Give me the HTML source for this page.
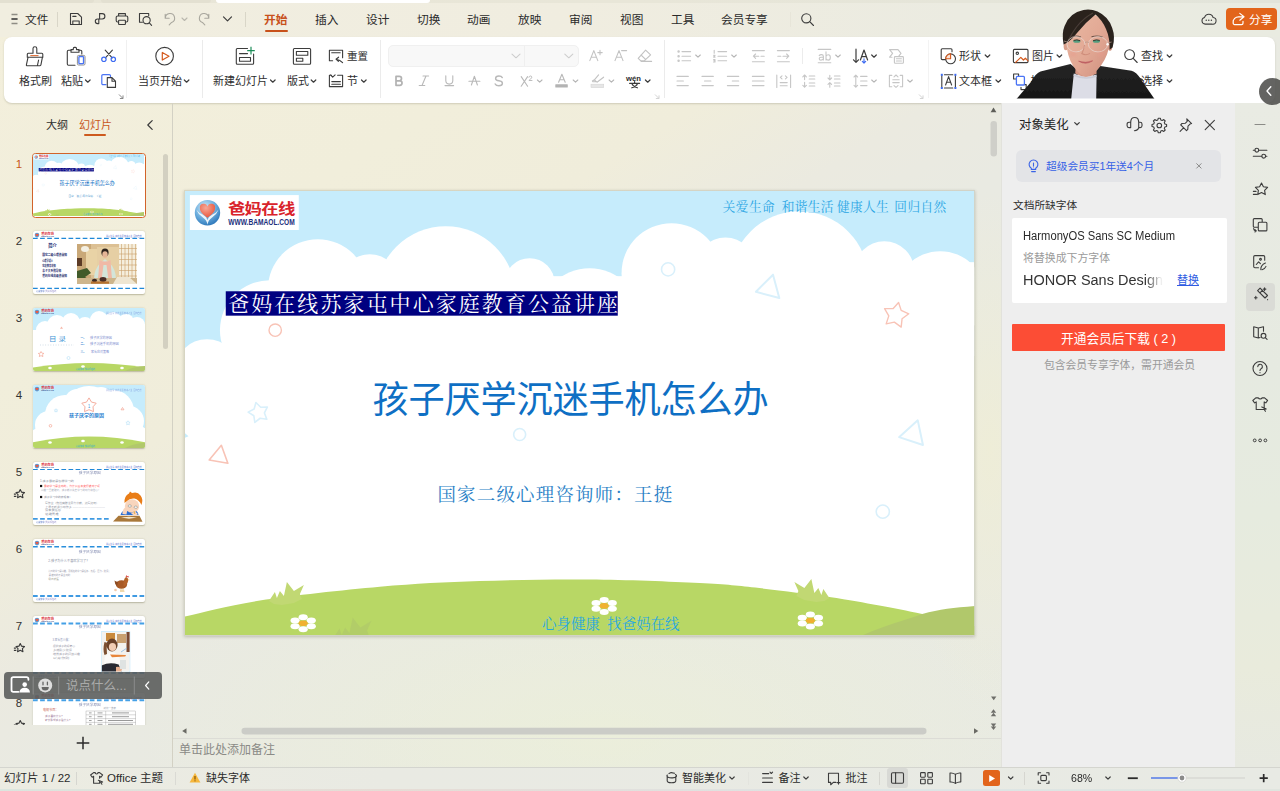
<!DOCTYPE html>
<html lang="zh-CN">
<head>
<meta charset="utf-8">
<title>WPS 演示 - 孩子厌学沉迷手机怎么办</title>
<style>
*{box-sizing:border-box;margin:0;padding:0}
html,body{width:1280px;height:791px;overflow:hidden}
body{position:relative;font-family:"Liberation Sans","Noto Sans CJK SC",sans-serif;font-size:12px;color:#2b2b2b;
background:radial-gradient(ellipse 470px 190px at 600px 735px,rgba(237,241,214,.6),rgba(237,241,214,0) 100%),radial-gradient(ellipse 90px 260px at 990px 450px,rgba(240,238,212,.75),rgba(240,238,212,0) 100%),linear-gradient(to bottom right,#f3efdc 0%,#f1eedb 24%,#f0eddb 34%,#ebeae0 43%,#e9eae2 50%,#e8eae3 100%)}
.a{position:absolute}
.t{position:absolute;white-space:nowrap;line-height:1}
svg{position:absolute;overflow:visible}
.ic{fill:none;stroke:#3c3c3c;stroke-width:1.1;stroke-linecap:round;stroke-linejoin:round}
.ig{fill:none;stroke:#b9b9b9;stroke-width:1.1;stroke-linecap:round;stroke-linejoin:round}
.r11{font-size:11px;color:#2e2e2e}
.chev{fill:none;stroke:#3c3c3c;stroke-width:1.2;stroke-linecap:round;stroke-linejoin:round}
.chevg{fill:none;stroke:#b5b5b5;stroke-width:1.1;stroke-linecap:round;stroke-linejoin:round}
.g{font-family:"Liberation Sans","Noto Sans CJK SC",sans-serif;font-size:1000px}
.gb{font-family:"Liberation Sans","Noto Sans CJK SC",sans-serif;font-size:1000px;font-weight:bold}
</style>
</head>
<body>
<svg width="0" height="0" style="position:absolute;left:-10px;top:-10px" aria-hidden="true"><defs><radialGradient id="lg1" cx=".4" cy=".3" r=".8"><stop offset="0" stop-color="#d6ecf8"/><stop offset=".5" stop-color="#6fb0df"/><stop offset="1" stop-color="#1f6bb2"/></radialGradient><radialGradient id="lg2" cx=".4" cy=".3" r=".8"><stop offset="0" stop-color="#f6a898"/><stop offset=".6" stop-color="#ee7058"/><stop offset="1" stop-color="#e2503a"/></radialGradient><symbol id="s1" viewBox="0 0 790 444" preserveAspectRatio="none"><rect width="790" height="444" fill="#c6ecfc"/><g fill="#fff"><circle cx="22.0" cy="180.2" r="32"/><circle cx="85.0" cy="139.2" r="50"/><circle cx="133.0" cy="98.2" r="50"/><circle cx="185.0" cy="93.2" r="30"/><circle cx="261.0" cy="105.2" r="70"/><circle cx="345.0" cy="92.2" r="25"/><circle cx="405.0" cy="129.2" r="52"/><circle cx="487.0" cy="82.2" r="50"/><circle cx="541.0" cy="76.6" r="30"/><circle cx="615.0" cy="89.2" r="69"/><circle cx="700.0" cy="80.2" r="30"/><circle cx="756.0" cy="105.2" r="45"/><rect x="0" y="160" width="790" height="284"/><rect x="85.0" y="139.2" width="705.0" height="25.8"/><rect x="105.0" y="98.2" width="685.0" height="66.8"/><rect x="160.0" y="85.2" width="630.0" height="79.8"/><rect x="455.0" y="71.2" width="335.0" height="93.8"/></g><path d="M0 242.2L3.500 245.2L0 246.7Z" fill="#c6ecfc"/><circle cx="90.3" cy="139.2" r="6.2" fill="none" stroke="#f8c3b6" stroke-width="1.4"/><circle cx="483.6" cy="78.4" r="6.6" fill="none" stroke="#d9f0fb" stroke-width="1.6"/><path d="M588.6 83.7L594.9 107.1L571.5 100.8Z" fill="none" stroke="#d9f0fb" stroke-width="2" stroke-linejoin="round"/><path d="M714.3 111.5L716.9 119.4L724.5 122.8L717.8 127.8L716.9 136.1L710.1 131.2L701.9 132.9L704.5 124.9L700.3 117.7L708.7 117.7Z" fill="none" stroke="#f8c3b6" stroke-width="1.4" stroke-linejoin="round"/><path d="M71.0 211.6L75.8 216.3L82.5 216.0L79.5 222.0L81.9 228.3L75.2 227.3L69.9 231.5L68.9 224.8L63.2 221.2L69.2 218.1Z" fill="none" stroke="#d9f0fb" stroke-width="1.6" stroke-linejoin="round"/><path d="M36.4 254.4L42.9 272.3L24.2 269.0Z" fill="none" stroke="#f8c3b6" stroke-width="1.6" stroke-linejoin="round"/><circle cx="335.0" cy="243.6" r="6" fill="none" stroke="#d9f0fb" stroke-width="1.6"/><path d="M733.5 229.4L738.7 254.0L714.8 246.2Z" fill="none" stroke="#d9f0fb" stroke-width="2" stroke-linejoin="round"/><circle cx="698.5" cy="320.7" r="6.6" fill="none" stroke="#d9f0fb" stroke-width="1.6"/><path d="M-35.0 435.2C-29.2 433.6 -18.3 429.9 0.0 425.7C18.3 421.4 42.5 414.7 75.0 409.7C107.5 404.7 158.3 399.2 195.0 395.9C231.7 392.7 260.0 391.4 295.0 390.2C330.0 389.0 368.3 388.4 405.0 388.7C441.7 389.0 486.7 390.8 515.0 392.2C543.3 393.6 553.3 394.9 575.0 397.2C596.7 399.5 625.0 403.3 645.0 406.2C665.0 409.1 679.5 411.9 695.0 414.7C710.5 417.5 722.2 419.8 738.0 423.2C753.8 426.6 775.5 431.5 790.0 435.2C804.5 438.9 819.2 443.5 825.0 445.2L830 454L-40 454Z" fill="#b8d765"/><path d="M674.4 446C699.4 435.0 718.0 430.2 738.0 423.2C756.0 417.7 769.6 416.7 792 414.9V446Z" fill="#b1c86b"/><path d="M84.0 410.2L90.0 401.2L92.0 407.2L95.0 400.2L99.0 405.2L102.0 391.2L109.0 400.2L119.0 394.2L115.0 403.2L117.0 408.2L109.0 412.2L97.0 414.2L89.0 413.2Z" fill="#c1d873" opacity="1"/><path d="M645.0 407.2L639.0 398.2L637.0 404.2L634.0 397.2L630.0 402.2L627.0 388.2L620.0 397.2L610.0 391.2L614.0 400.2L612.0 405.2L620.0 409.2L632.0 411.2L640.0 410.2Z" fill="#c1d873" opacity="1"/><path d="M148.1 447.5L154.7 437.6L156.9 444.2L160.2 436.5L164.6 442.0L167.9 426.6L175.6 436.5L186.6 429.9L182.2 439.8L184.4 445.3L175.6 449.7L162.4 451.9L153.6 450.8Z" fill="#b0ca6a" opacity="0.75"/><g fill="#fff"><ellipse cx="118.3" cy="426.4" rx="4.6" ry="3.0"/><ellipse cx="126.4" cy="429.6" rx="4.6" ry="3.0"/><ellipse cx="126.4" cy="435.3" rx="4.6" ry="3.0"/><ellipse cx="118.3" cy="438.4" rx="4.6" ry="3.0"/><ellipse cx="110.2" cy="435.3" rx="4.6" ry="3.0"/><ellipse cx="110.2" cy="429.6" rx="4.6" ry="3.0"/></g><ellipse cx="118.3" cy="432.4" rx="4.5" ry="2.8" fill="#f0b130"/><g fill="#fff"><ellipse cx="419.6" cy="409.0" rx="4.6" ry="3.0"/><ellipse cx="427.7" cy="412.2" rx="4.6" ry="3.0"/><ellipse cx="427.7" cy="417.9" rx="4.6" ry="3.0"/><ellipse cx="419.6" cy="421.0" rx="4.6" ry="3.0"/><ellipse cx="411.5" cy="417.9" rx="4.6" ry="3.0"/><ellipse cx="411.5" cy="412.2" rx="4.6" ry="3.0"/></g><ellipse cx="419.6" cy="415.0" rx="4.5" ry="2.8" fill="#f0b130"/><g fill="#fff"><ellipse cx="626.0" cy="423.6" rx="4.6" ry="3.0"/><ellipse cx="634.1" cy="426.8" rx="4.6" ry="3.0"/><ellipse cx="634.1" cy="432.5" rx="4.6" ry="3.0"/><ellipse cx="626.0" cy="435.6" rx="4.6" ry="3.0"/><ellipse cx="617.9" cy="432.5" rx="4.6" ry="3.0"/><ellipse cx="617.9" cy="426.8" rx="4.6" ry="3.0"/></g><ellipse cx="626.0" cy="429.6" rx="4.5" ry="2.8" fill="#f0b130"/><rect x="4.900" y="4.100" width="109" height="34.900" fill="#fff"/><circle cx="22.500" cy="21.700" r="12.700" fill="url(#lg1)"/><path d="M22.500 33.800q-.7-4.600-4.600-7.200q-4.600-3.200-6.600-8.200q2.600 3.600 6.200 5q3.600 1.600 5 5.600q1.400-4 5-5.600q3.600-1.400 6.200-5q-2 5-6.600 8.200q-3.900 2.600-4.600 7.200z" fill="#f2f8fc" opacity=".95"/><path d="M22.500 26.800c-4.600-3.300-7.600-6-7.600-9.500a3.900 3.900 0 0 1 7.600-1.700a3.900 3.900 0 0 1 7.600 1.700c0 3.500-3 6.200-7.600 9.500z" fill="url(#lg2)"/><text transform="translate(42.92 23.22) scale(0.01740 0.01444)" font-size="1000" font-weight="bold" letter-spacing="-40" fill="#d9232b" font-family="'Liberation Sans','Noto Sans CJK SC',sans-serif">爸妈在线</text><text transform="translate(43.3 33.7) scale(0.00663 0.00820)" font-size="1000" font-weight="bold" fill="#1b2f7c" font-family="'Liberation Sans','Noto Sans CJK SC',sans-serif">WWW.BAMAOL.COM</text><text transform="translate(538.37 20.05) scale(0.01270)" font-size="1000" letter-spacing="28" fill="#2ba6e4" font-family="'Liberation Serif','Noto Serif CJK SC',serif">关爱生命</text><text transform="translate(597.27 19.99) scale(0.01270)" font-size="1000" letter-spacing="28" fill="#2ba6e4" font-family="'Liberation Serif','Noto Serif CJK SC',serif">和谐生活</text><text transform="translate(652.67 20.10) scale(0.01270)" font-size="1000" letter-spacing="28" fill="#2ba6e4" font-family="'Liberation Serif','Noto Serif CJK SC',serif">健康人生</text><text transform="translate(710.08 20.01) scale(0.01270)" font-size="1000" letter-spacing="28" fill="#2ba6e4" font-family="'Liberation Serif','Noto Serif CJK SC',serif">回归自然</text><rect x="40.8" y="100.3" width="392.4" height="24.4" fill="#000080"/><text transform="translate(43.23 120.50) scale(0.02100)" font-size="1000" letter-spacing="100" fill="#fff" font-family="'Liberation Serif','Noto Serif CJK SC',serif">爸妈在线苏家屯中心家庭教育公益讲座</text><text transform="translate(187.79 222.13) scale(0.03620 0.03747)" font-size="1000" letter-spacing="-4" fill="#0e6fc4" font-family="'Liberation Sans','Noto Sans CJK SC',sans-serif">孩子厌学沉迷手机怎么办</text><text transform="translate(252.69 309.85) scale(0.01850)" font-size="1000" letter-spacing="65" fill="#2a7fc6" font-family="'Liberation Serif','Noto Serif CJK SC',serif">国家二级心理咨询师：王挺</text><text transform="translate(357.37 437.98) scale(0.01450)" font-size="1000" fill="#28a8e0" font-family="'Liberation Serif','Noto Serif CJK SC',serif">心身健康<tspan x="4500">找爸妈在线</tspan></text></symbol></defs></svg>
<!-- title strip remnants -->
<div class="a" style="left:0;top:0;width:94px;height:3px;background:#e3e0d1;border-radius:0 0 4px 0"></div>
<div class="a" style="left:101px;top:0;width:110px;height:3px;background:#e3e0d1;border-radius:0 0 4px 4px"></div>
<div class="a" style="left:215.500px;top:0;width:214px;height:3px;background:#fff;border-radius:0 0 6px 6px"></div>
<!-- menu row -->
<svg style="left:10px;top:13px" width="10" height="12" viewBox="0 0 10 12"><path d="M1.5 1.5h6M1.5 6h6M1.5 10.5h6" stroke="#8f8d84" stroke-width="1.3" fill="none"/><path d="M1.5 6h6" stroke="#3a3a3a" stroke-width="1.3" fill="none"/></svg>
<div class="t tl" style="left:25px;top:14.300px;font-size:11.700px;color:#2a2a2a">文件</div>
<div class="a" style="left:57px;top:12px;width:1px;height:15px;background:#d9d6c8"></div>
<!-- save -->
<svg style="left:69px;top:12px" width="14" height="14" viewBox="0 0 14 14"><path class="ic" d="M1.5 1.5h7.2l3.8 3.6v7.4h-11z"/><path class="ic" d="M3.8 12.3V9h6.4v3.3M3.8 4.4h3.2"/></svg>
<!-- link/export -->
<svg style="left:93px;top:12px" width="14" height="14" viewBox="0 0 14 14"><path class="ic" d="M6.6 1.6h2.6a2.7 2.7 0 0 1 0 5.4H4.6a2.3 2.3 0 0 0-2.3 2.3 2.3 2.3 0 0 0 2.3 2.3h1.2V7.2"/><path class="ic" d="M6.6 1.6v5"/></svg>
<!-- print -->
<svg style="left:115px;top:12px" width="14" height="14" viewBox="0 0 14 14"><path class="ic" d="M3.6 4V1.6h6.8V4M3.4 10H2.6a1.4 1.4 0 0 1-1.4-1.4V5.4A1.4 1.4 0 0 1 2.6 4h8.8a1.4 1.4 0 0 1 1.4 1.4v3.2a1.4 1.4 0 0 1-1.4 1.4h-.8"/><rect class="ic" x="3.6" y="8.2" width="6.8" height="4.3" rx=".6"/></svg>
<!-- preview -->
<svg style="left:138px;top:12px" width="15" height="15" viewBox="0 0 15 15"><path class="ic" d="M4.4 10.3H1.5V1.5h9.2v2.3"/><circle class="ic" cx="8.6" cy="8.2" r="3.6"/><path class="ic" d="M11.3 10.9l2.3 2.4"/></svg>
<!-- undo / redo (disabled) -->
<svg style="left:163px;top:12px" width="14" height="14" viewBox="0 0 14 14"><path class="ig" style="stroke:#a9a79e" d="M2.2 2.2v4h4M2.4 6a4.6 4.6 0 1 1 6.2 4.4l-2.4 2.4"/></svg>
<svg style="left:181px;top:17px" width="7" height="5" viewBox="0 0 7 5"><path class="chevg" style="stroke:#b9b7ad" d="M1 1l2.5 2.5L6 1"/></svg>
<svg style="left:197px;top:12px" width="14" height="14" viewBox="0 0 14 14"><path class="ig" style="stroke:#a9a79e" d="M11.8 2.2v4h-4M11.6 6a4.6 4.6 0 1 0-6.2 4.4l2.4 2.4"/></svg>
<svg style="left:222px;top:15px" width="11" height="8" viewBox="0 0 11 8"><path class="chev" d="M1.5 1.8l4 4 4-4"/></svg>
<div class="a" style="left:245px;top:12px;width:1px;height:15px;background:#d9d6c8"></div>
<!-- tabs -->
<div class="t tl" style="left:264px;top:14.300px;font-size:11.700px;font-weight:bold;color:#c8511b">开始</div>
<div class="a" style="left:265px;top:30px;width:23px;height:2px;background:#c8511b;border-radius:1px"></div>
<div class="t tl" style="left:315px;top:14.300px;font-size:11.700px;color:#2a2a2a">插入</div>
<div class="t tl" style="left:366px;top:14.300px;font-size:11.700px;color:#2a2a2a">设计</div>
<div class="t tl" style="left:417px;top:14.300px;font-size:11.700px;color:#2a2a2a">切换</div>
<div class="t tl" style="left:467px;top:14.300px;font-size:11.700px;color:#2a2a2a">动画</div>
<div class="t tl" style="left:518px;top:14.300px;font-size:11.700px;color:#2a2a2a">放映</div>
<div class="t tl" style="left:569px;top:14.300px;font-size:11.700px;color:#2a2a2a">审阅</div>
<div class="t tl" style="left:620px;top:14.300px;font-size:11.700px;color:#2a2a2a">视图</div>
<div class="t tl" style="left:671px;top:14.300px;font-size:11.700px;color:#2a2a2a">工具</div>
<div class="t tl" style="left:721px;top:14.300px;font-size:11.700px;color:#2a2a2a">会员专享</div>
<div class="a" style="left:790px;top:12px;width:1px;height:15px;background:#e7e5d9"></div>
<svg style="left:800px;top:12px" width="15" height="15" viewBox="0 0 15 15"><circle class="ic" cx="6.3" cy="6.3" r="4.6"/><path class="ic" d="M9.7 9.7l3.8 3.8"/></svg>
<!-- cloud + share -->
<svg style="left:1200.500px;top:11.800px" width="15.600" height="13.800" viewBox="0 0 17 15"><path class="ic" d="M4.6 13.2a3.7 3.7 0 0 1-.7-7.3 4.8 4.8 0 0 1 9.3.1 3.6 3.6 0 0 1-.8 7.2z"/><circle cx="5.7" cy="9" r=".8" fill="#3c3c3c"/><circle cx="8.5" cy="9" r=".8" fill="#3c3c3c"/><circle cx="11.3" cy="9" r=".8" fill="#3c3c3c"/></svg>
<div class="a" style="left:1226px;top:8px;width:51px;height:22px;background:#e2641b;border-radius:4px"></div>
<svg style="left:1231px;top:12px" width="15" height="14" viewBox="0 0 15 14"><path d="M8.8 1.4l4.2 3.4-4.2 3.4M12.6 4.8H7.5a5.4 5.4 0 0 0-5.4 5.4M2.2 8.6v2.6a1.4 1.4 0 0 0 1.4 1.4h7a1.4 1.4 0 0 0 1.4-1.4V9.4" fill="none" stroke="#fff" stroke-width="1.2" stroke-linecap="round" stroke-linejoin="round"/></svg>
<div class="t tl" style="left:1249px;top:14.300px;font-size:11.700px;color:#fff">分享</div>
<!-- top bar tint -->
<div class="a" style="left:0;top:0;width:1280px;height:37px;background:linear-gradient(to right,#f1eee0 0%,#f0ede0 45%,#ebebe1 75%,#e9ebe1 100%);z-index:-1"></div>
<div class="a" style="left:0;top:0;width:1280px;height:2.500px;background:linear-gradient(to right,#e9e6d7,#e8e6d8 50%,#e2e4da);z-index:-1"></div>
<!-- ribbon panel -->
<div class="a" style="left:4px;top:36.5px;width:1271px;height:66px;background:#fff;border-radius:8px;box-shadow:0 1px 2px rgba(120,115,90,.28)"></div>
<!-- group separators -->
<div class="a" style="left:126px;top:40px;width:1px;height:58px;background:#f0f0f0"></div>
<div class="a" style="left:202px;top:40px;width:1px;height:58px;background:#ebebeb"></div>
<div class="a" style="left:380px;top:40px;width:1px;height:58px;background:#ebebeb"></div>
<div class="a" style="left:664px;top:40px;width:1px;height:58px;background:#ebebeb"></div>
<div class="a" style="left:802px;top:48px;width:1px;height:16px;background:#ececec"></div>
<div class="a" style="left:928px;top:40px;width:1px;height:58px;background:#f3f3f3"></div>
<!-- font boxes -->
<div class="a" style="left:388px;top:45px;width:191px;height:22px;background:#f8f8f8;border:1px solid #f0f0f0;border-radius:5px"></div>
<div class="a" style="left:524px;top:46px;width:1px;height:20px;background:#efefef"></div>
<!-- ribbon labels -->
<div class="t tl r11" style="left:19px;top:76px">格式刷</div>
<div class="t tl r11" style="left:61px;top:76px">粘贴</div>
<div class="t tl r11" style="left:138px;top:76px">当页开始</div>
<div class="t tl r11" style="left:213px;top:76px">新建幻灯片</div>
<div class="t tl r11" style="left:287px;top:76px">版式</div>
<div class="t tl r11" style="left:347px;top:51px;font-size:10.5px">重置</div>
<div class="t tl r11" style="left:347px;top:76px">节</div>
<div class="t tl r11" style="left:959px;top:51px">形状</div>
<div class="t tl r11" style="left:959px;top:76px">文本框</div>
<div class="t tl r11" style="left:1032px;top:51px">图片</div>
<div class="t tl r11" style="left:1030.500px;top:76px">排列</div>
<div class="t tl r11" style="left:1141px;top:51px">查找</div>
<div class="t tl r11" style="left:1141px;top:76px">选择</div>
<svg style="left:0;top:0" width="1280" height="110" viewBox="0 0 1280 110">
<!-- format painter -->
<g class="ic"><path d="M33 53.2v-4.6a1.9 1.9 0 0 1 3.8 0v4.6h5a1 1 0 0 1 1 1v3H27.3v-3a1 1 0 0 1 1-1z"/><path d="M28 57.4l-1.6 7.4q-.2 1 1 1h12.300q1 0 1.200-1l1.500-7.400M38.600 60l-1.200 5.600"/></g>
<path d="M30.300 55.600h8.200" stroke="#e0703a" stroke-width="1.100" fill="none"/>
<!-- paste -->
<g class="ic"><path d="M70.800 50.200h-2.300a1.200 1.200 0 0 0-1.200 1.200v12.600a1.200 1.200 0 0 0 1.200 1.200h6.500M79 50.200h1.600a1.200 1.200 0 0 1 1.200 1.200v2.600"/><path d="M71 52.200v-2.600h2.300v-1.200a1 1 0 0 1 1-1h1.200a1 1 0 0 1 1 1v1.200H79v2.600z"/></g>
<rect x="77.400" y="55.400" width="7.600" height="9.600" rx="1.200" fill="#fff" stroke="#8e8e8e" stroke-width="1"/>
<rect x="78.900" y="56.700" width="4.600" height="7" rx=".6" fill="none" stroke="#4a74f5" stroke-width="1.300"/>
<!-- scissors -->
<g class="ic"><path d="M105.200 50.200l7 7.600M112.400 50.200l-7 7.600"/></g>
<circle cx="103.900" cy="59.300" r="2.200" fill="none" stroke="#3d6bf2" stroke-width="1.200"/><circle cx="113.300" cy="59.300" r="2.200" fill="none" stroke="#3d6bf2" stroke-width="1.200"/>
<!-- copy -->
<path d="M106 84.600h-3a1.200 1.200 0 0 1-1.200-1.200v-7.600a1.200 1.200 0 0 1 1.200-1.200h6.300a1.200 1.200 0 0 1 1.200 1.200v1" fill="none" stroke="#4a74f5" stroke-width="1.200" stroke-linecap="round"/>
<g class="ic"><path d="M107.300 77.600h4.700l3.500 3.600v6.200h-8.200zM112 77.800v3.400h3.400"/></g>
<!-- launcher arrows -->
<g fill="none" stroke="#7d7d7d" stroke-width=".9"><path d="M119 94.500l3.800 3.800M123 95.400v3.100h-3.100"/><path d="M655 94.500l3.800 3.800M659 95.400v3.100h-3.100" stroke="#cfcfcf"/><path d="M919 94.500l3.800 3.800M923 95.400v3.100h-3.100" stroke="#cfcfcf"/></g>
<!-- play from current -->
<circle class="ic" cx="164.600" cy="56.200" r="8.800"/>
<path d="M162.300 52.500v7.600l6.700-3.800z" fill="none" stroke="#d4591c" stroke-width="1.200" stroke-linejoin="round"/>
<!-- new slide -->
<g class="ic"><path d="M247.500 48.500h-10.200a1 1 0 0 0-1 1v13.700a1 1 0 0 0 1 1h15.300a1 1 0 0 0 1-1v-9.200"/><path d="M239.500 53.600h8"/><rect x="239.500" y="57.500" width="11" height="3.800"/></g>
<path d="M251 46.800v7.600M247.200 50.600h7.600" stroke="#1e8e5a" stroke-width="1.200" fill="none"/>
<!-- layout -->
<g class="ic"><rect x="293.400" y="48.500" width="17.200" height="15.700" rx="1"/><rect x="296.400" y="51.500" width="11.400" height="3.800"/><rect x="296.400" y="58.300" width="6.400" height="3"/></g>
<!-- reset -->
<g class="ic"><path d="M332.600 60.800h-3.200V50.300h13.200v7.500M331.700 52.800h8.500M342.600 62.600q-2.400-2.600-6.400-3.400M338.600 57.200l-2.600 2 2.400 2.200"/></g>
<!-- section -->
<g class="ic"><path d="M331.600 75.200h-2.200v11.400h13.200V75.200h-5M330.400 74.800l2.300 2.300 2.400-2.300M331.800 81.600h8.600M331.800 84.300h8.600"/></g>
<!-- font dropdown chevrons -->
<path class="chevg" style="stroke:#cdcdcd" d="M512 54.200l4 3.600 4-3.600M564.800 54.200l4 3.600 4-3.600"/>
<!-- B I U A S X2 A -->
<path d="M396 76.400h3.300a2.200 2.200 0 0 1 0 4.400H396zm0 4.400h3.800a2.250 2.250 0 0 1 0 4.500H396z" fill="none" stroke="#b2b2b2" stroke-width="1.700" stroke-linejoin="round"/>
<g class="ig"><path d="M423 76h5.600M419.200 85.500h5.600M426 76l-4 9.500"/><path d="M445.800 75.800v4.800a3.500 3.500 0 0 0 7 0v-4.800M445 85.600h8.600"/><path d="M471.400 85l3-8.800 3 8.800M468.900 81.300h11"/><path d="M502.300 77.600q-.8-1.600-3.400-1.600-3.300 0-3.300 2.400 0 2 3.300 2.400 3.500.4 3.500 2.500 0 2.500-3.500 2.500-2.900 0-3.700-1.800" style="stroke-width:1.400"/><path d="M521.200 76.600l6.400 9.600M527.600 76.600l-6.400 9.600"/><path d="M558.600 82.300l3.300-8 3.300 8M559.700 79.800h4.400"/></g>
<path d="M528.900 77.300q.2-1.300 1.500-1.300 1.400 0 1.400 1.200 0 .8-1.100 1.700l-1.800 1.600h3.100" fill="none" stroke="#b5b5b5" stroke-width=".9" stroke-linecap="round" stroke-linejoin="round"/>
<rect x="555.300" y="84.200" width="12.500" height="3.300" rx=".6" fill="#b3b3b3"/>
<!-- A+ A- eraser -->
<g class="ig" style="stroke:#c2c2c2"><path d="M589.800 60.600l4-10 4 10M591.200 57.300h5.200M600 50.400v4.400M597.800 52.600h4.400"/><path d="M615 60.600l4-10 4 10M616.400 57.300h5.200M621.600 50.600h5"/><path d="M645.600 50.200l5 4.700-6.400 6h-3.400l-2.600-2.500zM641 55l4.600 4.400M641.200 61.400h10.400"/></g>
<!-- highlighter -->
<g class="ig" style="stroke:#c2c2c2"><path d="M598.600 74.800l-4.200 5 1.800 2-3.200 0-.6-.8 2-1.200M594.400 79.800l2.600 2.400 6.600-5"/></g>
<rect x="591" y="84.200" width="12.700" height="3.400" fill="#e6e6e6" stroke="#d5d5d5" stroke-width=".6"/>
<!-- phonetic guide -->
<text class="gb" transform="translate(626 80.6) scale(0.00771 0.00750)" fill="#2c2c2c">wén</text>
<g class="ic" style="stroke-width:1.200"><path d="M629.600 83.300h10M632 83.600q.6 2.600 5.400 4.200M637.400 83.600q-.6 2.600-5.600 4.200M634.600 81.600v1.600"/></g>
<!-- small chevrons -->
<g class="chev"><path d="M85.500 80l2.300 2.200 2.300-2.200"/><path d="M184.300 80l2.300 2.200 2.300-2.200"/><path d="M270.500 80l2.300 2.200 2.300-2.200"/><path d="M311.200 80l2.300 2.200 2.300-2.200"/><path d="M361.500 80l2.300 2.200 2.300-2.200"/><path d="M645.400 80l2.300 2.200 2.300-2.200"/><path d="M871.700 55l2.300 2.200 2.300-2.200"/><path d="M985.200 55l2.300 2.200 2.300-2.200"/><path d="M996 80l2.300 2.200 2.300-2.200"/><path d="M1057.100 55l2.300 2.200 2.300-2.200"/><path d="M1167.200 55l2.300 2.200 2.300-2.200"/><path d="M1167.200 80l2.300 2.200 2.300-2.200"/></g>
<g class="chevg"><path d="M537.400 80l2.300 2.200 2.300-2.200"/><path d="M573.200 80l2.300 2.200 2.300-2.200"/><path d="M609.100 80l2.300 2.200 2.300-2.200"/><path d="M695.700 55l2.300 2.200 2.300-2.200"/><path d="M731.700 55l2.300 2.200 2.300-2.200"/><path d="M835.700 55l2.300 2.200 2.300-2.200"/><path d="M871.700 80l2.300 2.200 2.300-2.200"/><path d="M907.700 80l2.300 2.200 2.300-2.200"/></g>
<!-- bullets / numbering / indent -->
<g class="ig" style="stroke:#c6c6c6"><path d="M682 51.600h8.600M682 56.200h8.600M682 60.800h8.600"/><circle cx="678.600" cy="51.600" r=".7"/><circle cx="678.600" cy="56.200" r=".7"/><circle cx="678.600" cy="60.800" r=".7"/>
<path d="M718 51.600h8.600M718 56.200h8.600M718 60.800h8.600M714.200 50.200v3M713.600 55.300h1.400l-1.400 1.800h1.500M713.600 59.600h1.400v2.400h-1.400M713.900 60.800h1"/>
<path d="M752.400 50.600h12M752.400 61.800h12M753.600 56.200h5.200M755.600 54l-2.200 2.200 2.200 2.200M761 56.200h3.200"/>
<path d="M777.400 50.600h12M777.400 61.800h12M783 56.200h5.600M786.600 54l2.200 2.200-2.200 2.200M777.800 56.200h3"/>
<!-- align rows -->
<path d="M677 76.400h11.300M677 81h6.400M677 85.600h11.300"/><path d="M702 76.400h11.300M704.500 81h6.400M702 85.600h11.300"/><path d="M727.400 76.400h11.300M732.300 81h6.400M727.400 85.600h11.300"/><path d="M752.400 76.400h11.600M752.400 81h11.600M752.400 85.600h11.600"/>
<path d="M776.800 75v12.400M790.600 75v12.400M780.200 82.600h7M780.200 85.800h7M782 75.800l-1.700 1.500 1.700 1.500M785.400 75.800l1.700 1.500-1.700 1.500"/>
<path d="M804.600 75.200v4.400M802.800 76.800l1.800-1.800 1.800 1.800M804.600 82.400v4.800M802.800 85.400l1.800 1.800 1.800-1.800M809.200 76h5.600M809.200 79h5.600M809.200 83h5.600M809.200 86h5.600"/>
<path d="M829.800 75.200v4.600M828 78l1.800 1.800 1.800-1.800M829.800 82.600v4.600M828 84.400l1.800-1.800 1.800 1.800M834.400 76h5.600M834.400 79h5.600M834.400 83h5.600M834.400 86h5.600"/>
<path d="M855.800 75.200v12M854 77l1.800-1.800 1.800 1.800M854 85.400l1.800 1.800 1.800-1.800M860.600 76.400h6.400M860.600 81h6.400M860.600 85.600h6.400"/>
<path d="M891.800 75.400h-2.400v11.400h2.400M900.200 75.400h2.400v11.400h-2.400M892.800 79.800h6.400M892.800 82.600h6.400M894 76.800l2-1.800 2 1.800M894 85.600l2 1.800 2-1.800"/>
<!-- ab -->
<path d="M818.200 49.400h12.600M818.200 62.800h12.600M823.400 60v-3.600q0-1.800-2-1.800-1.600 0-2.200 1M823.400 57.200h-2.400q-1.800 0-1.800 1.500 0 1.400 1.700 1.400 1.600 0 2.500-1.200M826 51.800v8.200M826 56.200q.8-1.500 2.300-1.500 2 0 2 2.700 0 2.700-2 2.700-1.500 0-2.300-1.400"/>
<!-- convert smartart -->
<path d="M889.600 49.600h8.400l3 3.800-3 3.800h-2M889.600 49.600l3 3.800-3 3.800h2.400"/><rect x="894.400" y="56.600" width="9" height="6.600" rx=".8" fill="#fff"/><path d="M896.400 58.800h5M896.400 61h5"/></g>
<!-- text direction -->
<g class="ic" style="stroke-width:1.200"><path d="M856 49.200v13M853.500 59.800l2.500 2.600 2.500-2.600M860.400 60l3.600-10 3.600 10M861.700 56.600h4.600"/></g>
<path d="M864 58.800v4M862.300 61.400l1.700 1.700 1.700-1.700" fill="none" stroke="#3d6bf2" stroke-width="1.100" stroke-linecap="round" stroke-linejoin="round"/>
<!-- shape -->
<g class="ic"><path d="M946.400 59.600h-4.200a1 1 0 0 1-1-1V49.800a1 1 0 0 1 1-1h8.800a1 1 0 0 1 1 1v2"/><circle cx="950.600" cy="58.800" r="4.900" fill="#fff"/></g>
<path d="M950.600 53.900a4.900 4.900 0 0 0-4.900 4.900h4.900z" fill="#fbe3d6" stroke="#d4591c" stroke-width="1.100" stroke-linejoin="round"/>
<!-- text box -->
<g class="ic"><path d="M941.800 75.600v11.600M955.400 75.600v11.600M945.600 85l3-8.400 3 8.400M946.600 82.200h4M944.400 74.800h8.400M944.400 88h8.400" /></g>
<g fill="#3d6bf2"><rect x="940.800" y="73.800" width="2" height="2"/><rect x="954.400" y="73.800" width="2" height="2"/><rect x="940.800" y="87" width="2" height="2"/><rect x="954.400" y="87" width="2" height="2"/></g>
<!-- picture -->
<g class="ic"><rect x="1013.400" y="49.400" width="14.600" height="13.200" rx="1"/><circle cx="1017.300" cy="53.300" r="1.200"/></g>
<path d="M1015.600 62.400l5.200-5 2.600 2.600 2-1.800 2.600 2.600" fill="none" stroke="#d4591c" stroke-width="1.200" stroke-linejoin="round" stroke-linecap="round"/>
<!-- arrange -->
<path class="ic" d="M1016 79h-2.400v-5h5v2.200M1023.600 84.600h2.600v5h-5.200v-2.400"/>
<rect x="1016.400" y="76.400" width="8" height="8.600" rx="1" fill="#fff" stroke="#4a74f5" stroke-width="1.300"/>
<!-- find -->
<g class="ic"><circle cx="1129.600" cy="54.600" r="4.900"/><path d="M1133.200 58.300l4 4.200"/></g>
<!-- select (mostly hidden) -->
<path class="ic" d="M1134.600 76l3.200 8.200 1.200-3.400 3.400-1.200z"/>
</svg>
<!-- left panel -->
<div class="t tl" style="left:46px;top:119.500px;font-size:11px;color:#2e2e2e">大纲</div>
<div class="t tl" style="left:79px;top:119.500px;font-size:11px;color:#c8561a">幻灯片</div>
<div class="a" style="left:83.500px;top:134px;width:22.500px;height:2px;background:#cd5a1e;border-radius:1px"></div>
<svg style="left:146px;top:119px" width="8" height="12" viewBox="0 0 8 12"><path d="M6.200 1.600L1.800 6l4.400 4.400" fill="none" stroke="#3a3a3a" stroke-width="1.200" stroke-linecap="round" stroke-linejoin="round"/></svg>
<div class="a" style="left:162.600px;top:154px;width:5.400px;height:195px;border-radius:2.700px;background:#d3d0c1"></div>
<div class="a" style="left:0;top:140px;width:172px;height:585px;overflow:hidden">
<div class="t tl" style="left:10px;width:18px;text-align:center;top:19px;font-size:11.500px;color:#c8561a">1</div>
<div class="t tl" style="left:10px;width:18px;text-align:center;top:96px;font-size:11.500px;color:#333">2</div>
<div class="t tl" style="left:10px;width:18px;text-align:center;top:173px;font-size:11.500px;color:#333">3</div>
<div class="t tl" style="left:10px;width:18px;text-align:center;top:250px;font-size:11.500px;color:#333">4</div>
<div class="t tl" style="left:10px;width:18px;text-align:center;top:327px;font-size:11.500px;color:#333">5</div>
<div class="t tl" style="left:10px;width:18px;text-align:center;top:404px;font-size:11.500px;color:#333">6</div>
<div class="t tl" style="left:10px;width:18px;text-align:center;top:480.5px;font-size:11.500px;color:#333">7</div>
<div class="t tl" style="left:10px;width:18px;text-align:center;top:558px;font-size:11.500px;color:#333">8</div>
<svg style="left:12.500px;top:347px" width="13.400" height="12.300" viewBox="0 0 12 11"><path d="M4.100 9.600L4.500 6.900 2.700 5 5.300 4.600 6.500 2.200 7.700 4.600 10.300 5 8.400 6.900 8.900 9.600 6.500 8.300z" fill="none" stroke="#3a3a3a" stroke-width="1" stroke-linejoin="round"/><path d="M.8 6.400h1.800M.8 8.400h2.200" stroke="#3a3a3a" stroke-width="1" fill="none"/></svg>
<svg style="left:12.500px;top:501px" width="13.400" height="12.300" viewBox="0 0 12 11"><path d="M4.100 9.600L4.500 6.900 2.700 5 5.300 4.600 6.500 2.200 7.700 4.600 10.300 5 8.400 6.900 8.900 9.600 6.500 8.300z" fill="none" stroke="#3a3a3a" stroke-width="1" stroke-linejoin="round"/><path d="M.8 6.400h1.800M.8 8.400h2.200" stroke="#3a3a3a" stroke-width="1" fill="none"/></svg>
<svg style="left:12.500px;top:578px" width="13.400" height="12.300" viewBox="0 0 12 11"><path d="M4.100 9.600L4.500 6.900 2.700 5 5.300 4.600 6.500 2.200 7.700 4.600 10.300 5 8.400 6.900 8.900 9.600 6.500 8.300z" fill="none" stroke="#3a3a3a" stroke-width="1" stroke-linejoin="round"/><path d="M.8 6.400h1.800M.8 8.400h2.200" stroke="#3a3a3a" stroke-width="1" fill="none"/></svg>
<div class="a" style="left:32px;top:13px;width:114px;height:65px;border:1.500px solid #d2632a;border-radius:3.500px;background:#fff;overflow:hidden"><svg style="left:0;top:0" width="111" height="62"><use href="#s1" width="111" height="62"/></svg></div>
<div class="a" style="left:33px;top:91px;width:112px;height:62.500px;border-radius:2px;background:#fff;overflow:hidden;box-shadow:0 .5px 1.500px rgba(120,115,80,.45)"><svg style="left:0;top:0" width="112" height="63" viewBox="0 0 112 63"><circle cx="4" cy="4.100" r="2.300" fill="#5a9fd8"/><path d="M4 5.600c-1-.7-1.600-1.300-1.600-2a.8.800 0 0 1 1.600-.3a.8.800 0 0 1 1.600.3c0 .7-.6 1.300-1.600 2z" fill="#ec5a44"/><text class="gb" transform="translate(8.2 4.39) scale(0.00320 0.00330)" fill="#d9232b">爸妈在线</text><text class="gb" transform="translate(8.2 6.14) scale(0.00127 0.00150)" fill="#26357e">WWW.BAMAOL.COM</text><text class="g" transform="translate(73 5.64) scale(0.00205)" fill="#4f63c6">关爱生命</text><text class="g" transform="translate(82.3 5.64) scale(0.00205)" fill="#4f63c6">和谐生活</text><text class="g" transform="translate(91.1 5.64) scale(0.00205)" fill="#4f63c6">健康人生</text><text class="g" transform="translate(100.4 5.64) scale(0.00205)" fill="#4f63c6">回归自然</text><path d="M0 7.4H112" stroke="#1f88d8" stroke-width="1.2" stroke-dasharray="4.700 2.400" fill="none"/><path d="M0 57.4H112" stroke="#1f88d8" stroke-width="1.2" stroke-dasharray="4.700 2.400" fill="none"/><text class="g" transform="translate(3 60.66) scale(0.00215 0.00210)" fill="#3559b8" opacity="0.9">心身健康</text><text class="g" transform="translate(12.6 60.66) scale(0.00216 0.00210)" fill="#6f66b8" opacity="0.8">找爸妈在线</text><defs><filter id="bl1" x="-10%" y="-10%" width="120%" height="120%"><feGaussianBlur stdDeviation=".55"/></filter><clipPath id="cp2"><rect x="44" y="13" width="60" height="40"/></clipPath></defs><g clip-path="url(#cp2)"><rect x="44" y="13" width="60" height="40" fill="#dcc094"/><g filter="url(#bl1)"><rect x="44" y="13" width="14" height="40" fill="#c9a878"/><rect x="53" y="18" width="12" height="26" fill="#e9d3a6"/><rect x="64" y="16" width="24" height="30" fill="#e6cfa4"/><rect x="86" y="13" width="18" height="40" fill="#f5eedc"/><path d="M88.500 13v40M92 13v40M95.500 13v40M99 13v40M102.500 13v40M86 17.500h18M86 23h18M86 28.500h18M86 34h18M86 39.500h18M86 45h18" stroke="#c9a06a" stroke-width=".6"/><ellipse cx="52" cy="18" rx="4" ry="3" fill="#f3efe2"/><path d="M44 40l10-3 4 5-6 4 6 4-14 3z" fill="#3f5a2c"/><rect x="44" y="27" width="5" height="8" fill="#5b3a28"/><ellipse cx="72" cy="21.500" rx="3.600" ry="4" fill="#2e241d"/><ellipse cx="72" cy="23.500" rx="2.700" ry="3.200" fill="#e5b596"/><path d="M61 47.500q.5-10 6.500-15.500l4.500-4 4.500 4q6 5.500 6.500 15.500l-3.500.8-2-6-.5 8h-10l-.5-8-2 6z" fill="#d3e5d9"/><path d="M66.500 29q5.500 3 11 0l1.500 20h-3.500l-2-15-3 0-2 15h-3.500z" fill="#f0b9a6"/><rect x="44" y="47" width="60" height="6" fill="#cdb58c"/><ellipse cx="70" cy="48.500" rx="3.400" ry="2.400" fill="#4a2f28"/><ellipse cx="61.500" cy="49.500" rx="2.600" ry="1.700" fill="#3b2a26"/><rect x="58" y="50.500" width="18" height="2.200" fill="#b56f2e"/><path d="M84 46l12 0 8 7h-24z" fill="#efe6d2"/></g></g><text class="gb" transform="translate(15.3 16.11) scale(0.00430 0.00420)" fill="#1d2f78">简介</text><text class="gb" transform="translate(9.2 25.04) scale(0.00276 0.00290)" fill="#1b2a6c">国家二级心理咨询师</text><text class="gb" transform="translate(9.2 30.54) scale(0.00216 0.00290)" fill="#1b2a6c">心理学硕士</text><text class="gb" transform="translate(9.2 35.84) scale(0.00227 0.00290)" fill="#1b2a6c">家庭教育讲师</text><text class="gb" transform="translate(9.2 41.04) scale(0.00274 0.00290)" fill="#1b2a6c">亲子关系指导师</text><text class="gb" transform="translate(9.2 46.34) scale(0.00276 0.00290)" fill="#1b2a6c">爸妈在线高级咨询师</text></svg></div>
<div class="a" style="left:33px;top:168px;width:112px;height:62.500px;border-radius:2px;background:#fff;overflow:hidden;box-shadow:0 .5px 1.500px rgba(120,115,80,.45)"><svg style="left:0;top:0" width="112" height="63" viewBox="0 0 112 63"><rect width="112" height="63" fill="#c6ecfc"/><g fill="#fff"><circle cx="12" cy="22" r="9"/><circle cx="24" cy="17" r="10"/><circle cx="38" cy="14" r="9"/><circle cx="52" cy="17" r="8"/><circle cx="66" cy="12" r="9"/><circle cx="80" cy="13" r="9"/><circle cx="93" cy="14" r="8"/><circle cx="104" cy="17" r="8"/><circle cx="4" cy="28" r="6"/><rect x="0" y="22" width="112" height="41"/><rect x="18" y="16" width="94" height="10"/></g><path d="M-3 60 Q56 50 115 60 V64H-3Z" fill="#b8d765"/><path d="M92 63q10-5 20-5v5z" fill="#b1c86b"/><ellipse cx="17" cy="60" rx="1.800" ry="1.300" fill="#fff"/><ellipse cx="50" cy="58.5" rx="1.800" ry="1.300" fill="#fff"/><ellipse cx="89" cy="60" rx="1.800" ry="1.300" fill="#fff"/><circle cx="4" cy="4.100" r="2.300" fill="#5a9fd8"/><path d="M4 5.600c-1-.7-1.600-1.300-1.600-2a.8.800 0 0 1 1.600-.3a.8.800 0 0 1 1.600.3c0 .7-.6 1.300-1.600 2z" fill="#ec5a44"/><text class="gb" transform="translate(8.2 4.39) scale(0.00320 0.00330)" fill="#d9232b">爸妈在线</text><text class="gb" transform="translate(8.2 6.14) scale(0.00127 0.00150)" fill="#26357e">WWW.BAMAOL.COM</text><text class="g" transform="translate(73 5.64) scale(0.00205)" fill="#4f63c6" opacity="0.55">关爱生命</text><text class="g" transform="translate(82.3 5.64) scale(0.00205)" fill="#4f63c6" opacity="0.55">和谐生活</text><text class="g" transform="translate(91.1 5.64) scale(0.00205)" fill="#4f63c6" opacity="0.55">健康人生</text><text class="g" transform="translate(100.4 5.64) scale(0.00205)" fill="#4f63c6" opacity="0.55">回归自然</text><text class="g" transform="translate(43 61.56) scale(0.00210)" fill="#28a8e0" opacity="0.9">心身健康 找爸妈在线</text><text class="g" transform="translate(16 32.87) scale(0.00746 0.00520)" fill="#3c93d4">目 录</text><path d="M7 37h34" stroke="#c9d7e2" stroke-width=".9" stroke-dasharray=".9 1.700"/><text class="gb" transform="translate(47.5 30.84) scale(0.00280 0.00290)" fill="#2b7fd0">一、</text><text class="gb" transform="translate(47.5 36.94) scale(0.00280 0.00290)" fill="#2b7fd0">二、</text><text class="gb" transform="translate(47.5 44.84) scale(0.00280 0.00290)" fill="#2b7fd0">三、</text><text class="g" transform="translate(57 30.84) scale(0.00314 0.00290)" fill="#7f8fd0">孩子厌学的原因</text><text class="g" transform="translate(57 36.94) scale(0.00322 0.00290)" fill="#7f8fd0">孩子沉迷手机的原因</text><text class="g" transform="translate(58 44.84) scale(0.00300 0.00290)" fill="#7f8fd0">家长应对策略</text><path d="M8 43.500l1 1.700 1.900.2-1.400 1.300.4 1.900-1.900-1-1.700 1 .4-1.900-1.400-1.300 1.900-.2z" fill="none" stroke="#f3a594" stroke-width=".7"/><path d="M28.500 18.500l1.500 2.300h-3z" fill="#f6b7a8"/><circle cx="35.500" cy="50" r="1.500" fill="none" stroke="#bfe4f8" stroke-width=".7"/></svg></div>
<div class="a" style="left:33px;top:245px;width:112px;height:62.500px;border-radius:2px;background:#fff;overflow:hidden;box-shadow:0 .5px 1.500px rgba(120,115,80,.45)"><svg style="left:0;top:0" width="112" height="63" viewBox="0 0 112 63"><rect width="112" height="63" fill="#c6ecfc"/><g fill="#fff"><circle cx="56" cy="28" r="27"/><circle cx="32" cy="30" r="20"/><circle cx="80" cy="26" r="21"/><circle cx="16" cy="40" r="14"/><circle cx="96" cy="36" r="15"/><circle cx="44" cy="16" r="12"/><circle cx="68" cy="13" r="11"/><circle cx="6" cy="52" r="9"/><circle cx="106" cy="50" r="9"/><rect x="0" y="46" width="112" height="17"/></g><path d="M-3 58 Q56 45 115 58 V64H-3Z" fill="#b8d765"/><path d="M92 63q10-5 20-5v5z" fill="#b1c86b"/><ellipse cx="17" cy="57.5" rx="1.800" ry="1.300" fill="#fff"/><ellipse cx="50" cy="56.0" rx="1.800" ry="1.300" fill="#fff"/><ellipse cx="89" cy="57.5" rx="1.800" ry="1.300" fill="#fff"/><circle cx="4" cy="4.100" r="2.300" fill="#5a9fd8"/><path d="M4 5.600c-1-.7-1.600-1.300-1.600-2a.8.800 0 0 1 1.600-.3a.8.800 0 0 1 1.600.3c0 .7-.6 1.300-1.600 2z" fill="#ec5a44"/><text class="gb" transform="translate(8.2 4.39) scale(0.00320 0.00330)" fill="#d9232b">爸妈在线</text><text class="gb" transform="translate(8.2 6.14) scale(0.00127 0.00150)" fill="#26357e">WWW.BAMAOL.COM</text><text class="g" transform="translate(73 5.64) scale(0.00205)" fill="#4f63c6" opacity="0.55">关爱生命</text><text class="g" transform="translate(82.3 5.64) scale(0.00205)" fill="#4f63c6" opacity="0.55">和谐生活</text><text class="g" transform="translate(91.1 5.64) scale(0.00205)" fill="#4f63c6" opacity="0.55">健康人生</text><text class="g" transform="translate(100.4 5.64) scale(0.00205)" fill="#4f63c6" opacity="0.55">回归自然</text><text class="g" transform="translate(43 61.96) scale(0.00210)" fill="#28a8e0" opacity="0.9">心身健康 找爸妈在线</text><path d="M56.0 12.9L58.5 17.1L63.2 18.2L60.0 21.8L60.5 26.6L56.0 24.7L51.5 26.6L52.0 21.8L48.8 18.2L53.5 17.1Z" fill="#fff" stroke="#f3a594" stroke-width=".9" stroke-linejoin="round"/><text class="g" transform="translate(54.9 22.56) scale(0.00396 0.00460)" fill="#3c8fd6">1</text><text class="gb" transform="translate(36 32.43) scale(0.00500 0.00480)" fill="#2b7fd0">孩子厌学的原因</text><circle cx="17.500" cy="40.800" r="1.300" fill="none" stroke="#f3a594" stroke-width=".7"/><path d="M89.500 22.500l1.500 2.300h-3z" fill="none" stroke="#f3a594" stroke-width=".7"/><path d="M95.0 35.8L95.6 37.1L97.1 37.3L96.0 38.3L96.3 39.8L95.0 39.1L93.7 39.8L94.0 38.3L92.9 37.3L94.4 37.1Z" fill="none" stroke="#bfe4f8" stroke-width=".7"/><path d="M23.0 23.7L23.5 24.8L24.7 24.9L23.9 25.8L24.1 27.0L23.0 26.4L21.9 27.0L22.1 25.8L21.3 24.9L22.5 24.8Z" fill="none" stroke="#bfe4f8" stroke-width=".7"/></svg></div>
<div class="a" style="left:33px;top:322px;width:112px;height:62.500px;border-radius:2px;background:#fff;overflow:hidden;box-shadow:0 .5px 1.500px rgba(120,115,80,.45)"><svg style="left:0;top:0" width="112" height="63" viewBox="0 0 112 63"><circle cx="4" cy="4.100" r="2.300" fill="#5a9fd8"/><path d="M4 5.600c-1-.7-1.600-1.300-1.600-2a.8.800 0 0 1 1.600-.3a.8.800 0 0 1 1.600.3c0 .7-.6 1.300-1.600 2z" fill="#ec5a44"/><text class="gb" transform="translate(8.2 4.39) scale(0.00320 0.00330)" fill="#d9232b">爸妈在线</text><text class="gb" transform="translate(8.2 6.14) scale(0.00127 0.00150)" fill="#26357e">WWW.BAMAOL.COM</text><text class="g" transform="translate(73 5.64) scale(0.00205)" fill="#4f63c6">关爱生命</text><text class="g" transform="translate(82.3 5.64) scale(0.00205)" fill="#4f63c6">和谐生活</text><text class="g" transform="translate(91.1 5.64) scale(0.00205)" fill="#4f63c6">健康人生</text><text class="g" transform="translate(100.4 5.64) scale(0.00205)" fill="#4f63c6">回归自然</text><path d="M0 7.5H112" stroke="#1f88d8" stroke-width="1.2" stroke-dasharray="4.700 2.400" fill="none"/><path d="M0 56.8H76" stroke="#3f9ae2" stroke-width="1.8" stroke-dasharray="4.700 2.400" fill="none"/><text class="g" transform="translate(3 60.66) scale(0.00215 0.00210)" fill="#3559b8" opacity="0.9">心身健康</text><text class="g" transform="translate(12.6 60.66) scale(0.00216 0.00210)" fill="#6f66b8" opacity="0.8">找爸妈在线</text><text class="g" transform="translate(45.8 11.96) scale(0.00367 0.00350)" fill="#7d86ad" opacity="0.95">孩子厌学原因</text><text class="g" transform="translate(7 19.81) scale(0.00314 0.00280)" fill="#8a8f9c">1.孩子最初是怎样学习的</text><rect x="7.0" y="22.90" width="2.2" height="2.2" fill="#111" opacity="1"/><text class="g" transform="translate(11 25.01) scale(0.00281 0.00280)" fill="#ff5a5a">最初学习是主动的，为什么后来变得被动了呢</text><text class="g" transform="translate(8 29.01) scale(0.00260 0.00280)" fill="#a9adba">兴趣一旦被破坏，孩子就会失去学习的动力和信心！</text><rect x="7.0" y="33.90" width="2.2" height="2.2" fill="#111" opacity="1"/><text class="g" transform="translate(11 36.01) scale(0.00280)" fill="#8a8f9c">孩子学习中的表现有：</text><text class="g" transform="translate(12 42.47) scale(0.00284 0.00270)" fill="#9094a0">写作业（拖拉磨蹭注意力分散，边写边玩）</text><text class="g" transform="translate(12 46.27) scale(0.00296 0.00270)" fill="#9094a0">上课不听讲小动作多 ……………………………</text><text class="g" transform="translate(12 49.17) scale(0.00320 0.00270)" fill="#9094a0">没有责任感</text><text class="g" transform="translate(12 52.57) scale(0.00340 0.00270)" fill="#9094a0">逃避畏难</text><path d="M80 59.500l5.500-5.800h21l3 6z" fill="#a9783a"/><path d="M88 55.600l8-.8 8 .8-8 1.200z" fill="#f4ead2"/><path d="M87.500 53q1-4.500 6-5h7q4.500.5 5 5z" fill="#2d6fd2"/><ellipse cx="99" cy="44" rx="7.200" ry="6.800" fill="#f8d5bd"/><path d="M91.500 41q-.5-7 4.500-9.500l1-2 2 1.500q5.500-2 8.500 2.500 3 3.500 1 9.500-2.500-5.500-7-6.500-5-.5-7.500 2.500z" fill="#e97d17"/><ellipse cx="96.800" cy="44" rx="1.700" ry="1.100" fill="#fff" stroke="#566" stroke-width=".4"/><ellipse cx="102.800" cy="45.200" rx="1.700" ry="1.100" fill="#fff" stroke="#566" stroke-width=".4"/><path d="M89.500 52q-.5-4 2.500-6.500l2.500 1.500-1 5.500z" fill="#f8d5bd"/><path d="M98 51.500l4-2 3 2.500-3 2z" fill="#f8d5bd"/><path d="M101 49l.8 3" stroke="#e0a020" stroke-width=".7"/></svg></div>
<div class="a" style="left:33px;top:399px;width:112px;height:62.500px;border-radius:2px;background:#fff;overflow:hidden;box-shadow:0 .5px 1.500px rgba(120,115,80,.45)"><svg style="left:0;top:0" width="112" height="63" viewBox="0 0 112 63"><circle cx="4" cy="4.100" r="2.300" fill="#5a9fd8"/><path d="M4 5.600c-1-.7-1.600-1.300-1.600-2a.8.800 0 0 1 1.600-.3a.8.800 0 0 1 1.600.3c0 .7-.6 1.300-1.600 2z" fill="#ec5a44"/><text class="gb" transform="translate(8.2 4.39) scale(0.00320 0.00330)" fill="#d9232b">爸妈在线</text><text class="gb" transform="translate(8.2 6.14) scale(0.00127 0.00150)" fill="#26357e">WWW.BAMAOL.COM</text><text class="g" transform="translate(73 5.64) scale(0.00205)" fill="#4f63c6">关爱生命</text><text class="g" transform="translate(82.3 5.64) scale(0.00205)" fill="#4f63c6">和谐生活</text><text class="g" transform="translate(91.1 5.64) scale(0.00205)" fill="#4f63c6">健康人生</text><text class="g" transform="translate(100.4 5.64) scale(0.00205)" fill="#4f63c6">回归自然</text><path d="M0 7.7H112" stroke="#2a8fdc" stroke-width="1.6" stroke-dasharray="4.700 2.400" fill="none"/><path d="M0 57H112" stroke="#3f9ae2" stroke-width="1.8" stroke-dasharray="4.700 2.400" fill="none"/><text class="g" transform="translate(3 60.66) scale(0.00215 0.00210)" fill="#3559b8" opacity="0.9">心身健康</text><text class="g" transform="translate(12.6 60.66) scale(0.00216 0.00210)" fill="#6f66b8" opacity="0.8">找爸妈在线</text><text class="g" transform="translate(45.8 14.16) scale(0.00367 0.00350)" fill="#7d86ad" opacity="0.95">孩子厌学原因</text><text class="g" transform="translate(15.3 23.34) scale(0.00321 0.00290)" fill="#8c93a6">2.孩子为什么不喜欢学习了？</text><text class="g" transform="translate(15.3 33.21) scale(0.00224 0.00280)" fill="#9a9aac">儿时的学习是兴趣，而现在的学习是任务、负担、压力、批评；</text><text class="g" transform="translate(15.8 36.91) scale(0.00239 0.00280)" fill="#9a9aac">是被动的不是主动的</text><text class="g" transform="translate(15.3 41.01) scale(0.00268 0.00280)" fill="#a8a89a">母鸡孵蛋</text><ellipse cx="88.500" cy="45.500" rx="5.600" ry="4.300" fill="#a85a26"/><path d="M81.500 41.500q1.500 1 3.500 1.500l-1 4q-2.500-2-2.500-5.500z" fill="#8c4a20"/><path d="M90.500 43.500q.5-5 3-5.600 2 .8 1.600 4-.6 4-4.600 5.600z" fill="#b4632a"/><path d="M92.500 37.400l1.200-1.200.8 1.200.9-.6.300 1.700z" fill="#d8302a"/><path d="M95.300 40.300l1.300.6-1.300.5z" fill="#e8a020"/><path d="M88 49.600v2.400M90 49.600v2.400M87 52.200h4.500" stroke="#d9a23a" stroke-width=".6"/><circle cx="82.500" cy="51" r="1.300" fill="#f3c9a8"/></svg></div>
<div class="a" style="left:33px;top:475.5px;width:112px;height:62.500px;border-radius:2px;background:#fff;overflow:hidden;box-shadow:0 .5px 1.500px rgba(120,115,80,.45)"><svg style="left:0;top:0" width="112" height="63" viewBox="0 0 112 63"><circle cx="4" cy="4.100" r="2.300" fill="#5a9fd8"/><path d="M4 5.600c-1-.7-1.600-1.300-1.600-2a.8.800 0 0 1 1.600-.3a.8.800 0 0 1 1.600.3c0 .7-.6 1.300-1.600 2z" fill="#ec5a44"/><text class="gb" transform="translate(8.2 4.39) scale(0.00320 0.00330)" fill="#d9232b">爸妈在线</text><text class="gb" transform="translate(8.2 6.14) scale(0.00127 0.00150)" fill="#26357e">WWW.BAMAOL.COM</text><text class="g" transform="translate(73 5.64) scale(0.00205)" fill="#4f63c6">关爱生命</text><text class="g" transform="translate(82.3 5.64) scale(0.00205)" fill="#4f63c6">和谐生活</text><text class="g" transform="translate(91.1 5.64) scale(0.00205)" fill="#4f63c6">健康人生</text><text class="g" transform="translate(100.4 5.64) scale(0.00205)" fill="#4f63c6">回归自然</text><path d="M0 7.5H112" stroke="#44a0e6" stroke-width="1.9" stroke-dasharray="4.700 2.400" fill="none"/><path d="M0 57H112" stroke="#3f9ae2" stroke-width="1.8" stroke-dasharray="4.700 2.400" fill="none"/><text class="g" transform="translate(3 60.66) scale(0.00215 0.00210)" fill="#3559b8" opacity="0.9">心身健康</text><text class="g" transform="translate(12.6 60.66) scale(0.00216 0.00210)" fill="#6f66b8" opacity="0.8">找爸妈在线</text><text class="g" transform="translate(45.8 12.46) scale(0.00367 0.00350)" fill="#7d86ad" opacity="0.95">孩子厌学原因</text><text class="g" transform="translate(19.5 25.24) scale(0.00268 0.00290)" fill="#8c97b8">3.家长怎么做：</text><text class="g" transform="translate(20 30.51) scale(0.00275 0.00280)" fill="#9a9aa8">保护孩子的好奇心</text><text class="g" transform="translate(20 34.51) scale(0.00317 0.00280)" fill="#9a9aa8">多鼓励少批评</text><text class="g" transform="translate(20 38.81) scale(0.00300 0.00280)" fill="#9a9aa8">培养孩子的阅读兴趣</text><text class="g" transform="translate(20 42.81) scale(0.00410 0.00280)" fill="#9a9aa8">以身作则</text><defs><clipPath id="cp7"><rect x="68.600" y="16" width="28" height="39.600"/></clipPath></defs><rect x="68.300" y="15.700" width="28.600" height="40.200" fill="#fff" stroke="#b5e2f8" stroke-width=".6"/><g clip-path="url(#cp7)"><rect x="68.600" y="16" width="28" height="40" fill="#f4f2ee"/><g filter="url(#bl1)"><rect x="73" y="17" width="9" height="8" fill="#c98a3c"/><rect x="84" y="18" width="9" height="9" fill="#c9a070"/><rect x="93.500" y="16" width="3.500" height="20" fill="#7a4a30"/><ellipse cx="79" cy="29" rx="5.600" ry="6.400" fill="#6b432a"/><ellipse cx="79.500" cy="31" rx="3.600" ry="4" fill="#f1cdb4"/><path d="M71.500 26q-2 8 0 13l2.500-1q-1-6 .5-11z" fill="#7b5030"/><path d="M71 48q0-11 8-12q8 1 8.500 12z" fill="#fbfaf8"/><path d="M77 38.500l15 .5q2 .5 0 1.600l-13 .6z" fill="#e8863a"/><path d="M88 36l6-4" stroke="#7ab0e0" stroke-width=".7"/><path d="M68.600 49.500q8-4 17-1l3 7.500h-20z" fill="#2c2c30"/><path d="M83 51q4-1 6 2l-1 3h-5z" fill="#e8b090"/><rect x="87" y="44" width="6" height="9" fill="#dfe3e2"/></g></g></svg></div>
<div class="a" style="left:33px;top:553px;width:112px;height:62.500px;border-radius:2px;background:#fff;overflow:hidden;box-shadow:0 .5px 1.500px rgba(120,115,80,.45)"><svg style="left:0;top:0" width="112" height="63" viewBox="0 0 112 63"><circle cx="4" cy="4.100" r="2.300" fill="#5a9fd8"/><path d="M4 5.600c-1-.7-1.600-1.300-1.600-2a.8.800 0 0 1 1.600-.3a.8.800 0 0 1 1.600.3c0 .7-.6 1.300-1.600 2z" fill="#ec5a44"/><text class="gb" transform="translate(8.2 4.39) scale(0.00320 0.00330)" fill="#d9232b">爸妈在线</text><text class="gb" transform="translate(8.2 6.14) scale(0.00127 0.00150)" fill="#26357e">WWW.BAMAOL.COM</text><text class="g" transform="translate(73 5.64) scale(0.00205)" fill="#4f63c6">关爱生命</text><text class="g" transform="translate(82.3 5.64) scale(0.00205)" fill="#4f63c6">和谐生活</text><text class="g" transform="translate(91.1 5.64) scale(0.00205)" fill="#4f63c6">健康人生</text><text class="g" transform="translate(100.4 5.64) scale(0.00205)" fill="#4f63c6">回归自然</text><path d="M0 7.3H112" stroke="#44a0e6" stroke-width="1.9" stroke-dasharray="4.700 2.400" fill="none"/><path d="M0 57H112" stroke="#3f9ae2" stroke-width="1.8" stroke-dasharray="4.700 2.400" fill="none"/><text class="g" transform="translate(3 60.66) scale(0.00215 0.00210)" fill="#3559b8" opacity="0.9">心身健康</text><text class="g" transform="translate(12.6 60.66) scale(0.00216 0.00210)" fill="#6f66b8" opacity="0.8">找爸妈在线</text><text class="g" transform="translate(45.8 13.06) scale(0.00367 0.00350)" fill="#7d86ad" opacity="0.95">孩子厌学原因</text><text class="g" transform="translate(70.4 15.79) scale(0.00252 0.00220)" fill="#8f9aa8">对比一览表</text><text class="g" transform="translate(10 18.34) scale(0.00308 0.00290)" fill="#c65a4a">电视节目：</text><text class="g" transform="translate(12 23.51) scale(0.00271 0.00280)" fill="#a07a98">孩子喜欢什么？</text><text class="g" transform="translate(12 27.71) scale(0.00267 0.00280)" fill="#a07a98">家长希望孩子看什么？</text><g fill="none" stroke="#8c8c8c" stroke-width=".35"><rect x="53" y="18" width="49.700" height="22"/><path d="M53 21.8h49.700"/><path d="M53 25.6h49.700"/><path d="M53 29.4h49.700"/><path d="M53 33.2h49.700"/><path d="M53 37.0h49.700"/><path d="M61.500 18v22M72.700 18v22"/></g><rect x="56.0" y="19.40" width="2.6" height="1" fill="#777" opacity="0.7"/><rect x="64.5" y="19.40" width="5.0" height="1" fill="#777" opacity="0.7"/><rect x="79.0" y="19.40" width="17.0" height="1" fill="#777" opacity="0.75"/><rect x="56.0" y="23.20" width="2.6" height="1" fill="#777" opacity="0.7"/><rect x="64.5" y="23.20" width="5.0" height="1" fill="#777" opacity="0.7"/><rect x="79.0" y="23.20" width="17.0" height="1" fill="#777" opacity="0.75"/><rect x="56.0" y="27.00" width="2.6" height="1" fill="#777" opacity="0.7"/><rect x="64.5" y="27.00" width="5.0" height="1" fill="#777" opacity="0.7"/><rect x="75.0" y="27.00" width="25.0" height="1" fill="#777" opacity="0.75"/><rect x="56.0" y="30.80" width="2.6" height="1" fill="#777" opacity="0.7"/><rect x="64.5" y="30.80" width="5.0" height="1" fill="#777" opacity="0.7"/><rect x="75.0" y="30.80" width="25.0" height="1" fill="#777" opacity="0.75"/><rect x="56.0" y="34.60" width="2.6" height="1" fill="#777" opacity="0.7"/><rect x="64.5" y="34.60" width="5.0" height="1" fill="#777" opacity="0.7"/><rect x="75.0" y="34.60" width="25.0" height="1" fill="#777" opacity="0.75"/></svg></div>
</div>
<div class="a" style="left:4px;top:672px;width:157.500px;height:27px;background:rgba(92,94,93,.90);border-radius:4px"></div>
<svg style="left:4px;top:672px" width="158" height="27" viewBox="0 0 158 27"><path d="M24.400 7.800V7a1.800 1.800 0 0 0-1.800-1.800H9.300A1.800 1.800 0 0 0 7.500 7v11a1.800 1.800 0 0 0 1.800 1.800h5.200" fill="none" stroke="#fff" stroke-width="1.800" stroke-linecap="round"/><circle cx="20.700" cy="12.600" r="2.300" fill="#fff"/><path d="M15.400 20.400q.6-4.600 5.300-4.600 4.700 0 5.300 4.600z" fill="#fff"/><path d="M29.200 4.500v18M54.700 4.500v18M130.300 4.500v18" stroke="#8b8d8c" stroke-width="1"/><circle cx="41.200" cy="13.400" r="7" fill="#dedede"/><path d="M39 10.200v2.600M43.400 10.200v2.600" stroke="#666" stroke-width="1.300" stroke-linecap="round"/><path d="M37.600 15h7.200a3.600 3.600 0 0 1-7.200 0z" fill="#666"/><path d="M144.800 9.900l-3.200 3.600 3.200 3.600" fill="none" stroke="#fff" stroke-width="1.200" stroke-linecap="round" stroke-linejoin="round"/></svg>
<div class="t tl" style="left:66px;top:679.500px;font-size:12.500px;color:#a9aaa9">说点什么...</div>
<svg style="left:76px;top:736px" width="14" height="14" viewBox="0 0 14 14"><path d="M7 .7v12.600M.7 7h12.600" stroke="#2b2b2b" stroke-width="1.500" fill="none"/></svg>
<!-- panel dividers -->
<div class="a" style="left:172px;top:103px;width:1px;height:664px;background:#d3d1c4"></div>
<!-- main slide -->
<div class="a" style="left:184.200px;top:190px;width:790.700px;height:445.500px;background:rgba(170,168,150,.35);box-shadow:0 1px 3px rgba(90,90,70,.30)"></div>
<svg style="left:185px;top:190.800px" width="789.200" height="443.900"><use href="#s1" width="789.200" height="443.900"/></svg>
<!-- vertical scrollbar -->
<svg style="left:988px;top:104px" width="12" height="630" viewBox="0 0 12 630"><path d="M2.600 8.200h5.800L5.500 3.600z" fill="#5e5e59"/><rect x="2.500" y="17" width="6.500" height="35.500" rx="3.200" fill="#cfcfc9"/><path d="M3 592.400h5.400l-2.700 3.800z" fill="#6e6e6a"/><path d="M2.800 608.700h5.400L5.500 605.200zM2.800 612.200h5.400L5.500 608.700z" fill="#6e6e6a"/><path d="M2.800 619.600h5.400l-2.700 3.500zM2.800 622.600h5.400l-2.700 3.500z" fill="#6e6e6a"/></svg>
<!-- horizontal scrollbar -->
<svg style="left:178px;top:724.600px" width="810" height="12" viewBox="0 0 810 12"><path d="M8.500 3.200v5.600L4.200 6z" fill="#6a6a64"/><rect x="63.500" y="2.800" width="685" height="6.600" rx="3.300" fill="#cbccc7"/><path d="M796 3.200v5.600l4.300-2.800z" fill="#6a6a64"/></svg>
<div class="a" style="left:173px;top:738px;width:828px;height:1px;background:#dcdcd6"></div>
<div class="t tl" style="left:179px;top:744px;font-size:12px;color:#8a8a86">单击此处添加备注</div>
<!-- right task pane -->
<div class="a" style="left:1002px;top:103px;width:233px;height:664px;background:#eeeeee"></div>
<div class="a" style="left:1235px;top:103px;width:45px;height:664px;background:linear-gradient(to bottom,#e9ebe3 0%,#e6eae1 40%,#e6ebdf 62%,#e9ebdc 85%,#e7e9e1 100%)"></div>
<div class="a" style="left:1001px;top:103px;width:1px;height:664px;background:#e2e2dc"></div>
<div class="t tl" style="left:1019px;top:119px;font-size:12.400px;color:#222">对象美化</div>
<svg style="left:1073px;top:121px" width="8" height="6" viewBox="0 0 8 6"><path class="chev" d="M1.700 1.600l2.300 2.200 2.300-2.200"/></svg>
<svg style="left:1126px;top:116px" width="92" height="18" viewBox="0 0 92 18">
<g class="ic"><path d="M4.700 6.400C4.700 3.100 6.200 1.500 8.700 1.500C11.200 1.500 12.700 3.100 12.700 6.400M4.700 6.200v5.400h-1.700a1.900 1.900 0 0 1-1.900-1.900v-1.600a1.900 1.900 0 0 1 1.900-1.900zM12.700 6.200v5.400h1.400a1.900 1.900 0 0 0 1.900-1.900v-1.600a1.900 1.900 0 0 0-1.900-1.900zM12.700 11.600q-.6 2.700-4.300 3.100"/>
<path d="M32.300 2.200h2l.5 1.700 1.400.6 1.600-.9 1.400 1.400-.9 1.600.6 1.400 1.700.5v2l-1.700.5-.6 1.400.9 1.600-1.400 1.400-1.600-.9-1.400.6-.5 1.700h-2l-.5-1.700-1.400-.6-1.600.9-1.400-1.400.9-1.600-.6-1.400-1.700-.5v-2l1.700-.5.600-1.400-.9-1.600 1.400-1.400 1.600.9 1.400-.6z"/><circle cx="33.300" cy="9.500" r="2.300"/>
<path d="M60.800 2.800l4.800 4.800-1.600.5-2 2-.2 3.200-1.300 1.300-5.800-5.800 1.300-1.300 3.200-.2 2-2zM57.500 11.900l-3.400 3.400"/>
<path d="M79.200 4.400l9.200 9.200M88.400 4.400l-9.200 9.200"/></g></svg>
<!-- promo -->
<div class="a" style="left:1016px;top:150px;width:204.500px;height:31.500px;background:#e3e4e7;border-radius:6px"></div>
<svg style="left:1027px;top:158px" width="13" height="16" viewBox="0 0 13 16"><path d="M4.300 11.400v-1.200A4.400 4.400 0 1 1 8.700 10.200v1.200zM4.600 13.600h3.800" fill="none" stroke="#3a63e6" stroke-width="1.100" stroke-linejoin="round" stroke-linecap="round"/><path d="M6.500 5v2.400" stroke="#3a63e6" stroke-width="1.100" stroke-linecap="round"/><circle cx="6.500" cy="8.800" r=".6" fill="#3a63e6"/></svg>
<div class="t tl" style="left:1046px;top:161px;font-size:10.700px;color:#3560e6">超级会员买1年送4个月</div>
<svg style="left:1195px;top:162px" width="8" height="8" viewBox="0 0 8 8"><path d="M1.400 1.400l5 5M6.400 1.400l-5 5" stroke="#8a8a8a" stroke-width="1" fill="none"/></svg>
<div class="t tl" style="left:1013px;top:199.500px;font-size:10.700px;color:#2e2e2e">文档所缺字体</div>
<!-- font card -->
<div class="a" style="left:1012px;top:217.500px;width:215px;height:85px;background:#fff;border-radius:2px"></div>
<div class="t tl" style="left:1023px;top:229.500px;font-size:12px;color:#2a2a2a;transform:scaleX(.934);transform-origin:0 50%">HarmonyOS Sans SC Medium</div>
<div class="t tl" style="left:1023px;top:252.800px;font-size:10.900px;color:#9b9b9b">将替换成下方字体</div>
<div class="t tl" style="left:1023px;top:271.700px;font-size:15.500px;color:#333;transform:scaleX(.934);transform-origin:0 50%">HONOR Sans Design</div>
<div class="a" style="left:1145px;top:268px;width:31px;height:22px;background:linear-gradient(to right,rgba(255,255,255,0) 0,#fff 58%,#fff 100%)"></div>
<div class="t tl" style="left:1177px;top:275.300px;font-size:11px;color:#2f5ce2;text-decoration:underline">替换</div>
<!-- button -->
<div class="a" style="left:1012px;top:323.500px;width:213px;height:27.500px;background:#fc4d35;border-radius:1px"></div>
<div class="t tl" style="left:1012px;top:332.600px;width:213px;text-align:center;font-size:12.700px;color:#fff">开通会员后下载 ( 2 )</div>
<div class="t tl" style="left:1013px;top:360.300px;width:213px;text-align:center;font-size:10.800px;color:#9a9a9a">包含会员专享字体，需开通会员</div>
<!-- tool strip -->
<div class="a" style="left:1246px;top:282.500px;width:28.500px;height:28px;background:#dadbd6;border-radius:4px"></div>
<svg style="left:1240px;top:110px" width="40" height="345" viewBox="0 0 40 345">
<g class="ic">
<path d="M15 14.500h10" style="stroke:#8b8b87"/>
<path d="M13.300 40.200h1.600M18.700 40.200h8.200M13.300 46.200h8.500M25.600 46.200h1.300"/><circle cx="16.800" cy="40.200" r="1.900"/><circle cx="23.700" cy="46.200" r="1.900"/>
<path d="M17.700 84.600l.7-4.200-3-3 4.200-.6 1.900-3.800 1.900 3.800 4.200.6-3 3 .7 4.200-3.800-2zM13.400 81.400h2.600M13.400 84.400h3.200"/>
<path d="M18.300 117.200h-4a1 1 0 0 1-1-1v-6.600a1 1 0 0 1 1-1h6.900a1 1 0 0 1 1 1v2.400M19.300 112.300h6.600a1 1 0 0 1 1 1v6.600a1 1 0 0 1-1 1h-6.600a1 1 0 0 1-1-1v-6.600a1 1 0 0 1 1-1zM13.600 118.600q.2 2 2.600 2.200M15 119.600l1.300 1.300-1.400 1.100"/>
<g transform="translate(-1 2)"><path d="M25.700 148.200v-3.400a1.200 1.200 0 0 0-1.200-1.200h-8.600a1.200 1.200 0 0 0-1.200 1.200v9.800a1.200 1.200 0 0 0 1.200 1.200h3.600M17.300 152.500l2.300-2.600 1.800 1.800M21.800 157.600q-.2-4.500 4.600-6.600M23 157.800q2.800-.6 4-3.400M20.600 147.200a.9.900 0 1 1 0 .1"/></g>
<path d="M17.600 180.600l2.500-2.500 7.400 7.400-2.500 2.500zM19.900 182.900l2.500-2.500M24.600 177.800v2.600M23.300 179.100h2.600M15.800 186.400v2.600M14.500 187.700h2.600M27.600 189.600v.1"/>
<g transform="translate(-1.500 .5)"><path d="M15.200 216.200l4.600 1.300v10l-4.600-1.300zM19.800 217.500l5.200-1.300v4.500M19.800 227.500l1.800-.5"/><circle cx="25" cy="225.300" r="2.400"/><path d="M26.800 227.100l1.800 1.800"/></g>
<circle cx="20" cy="258.500" r="7"/><path d="M17.800 256.600a2.300 2.300 0 1 1 3.300 2.100c-.8.400-1.100.9-1.100 1.700M20 262.600v.2"/>
<g transform="translate(-1 .3)"><path d="M16.800 287.600l-3 2.600 1.800 2.400 1.600-1v7.600h8v-7.600l1.600 1 1.800-2.400-3-2.600h-2.400a2.400 2.400 0 0 1-4 0zM22.800 296.600l4.400 2-2 .6 1.200 1.800"/></g>
</g>
<g fill="none" stroke="#3c3c3c" stroke-width="1"><circle cx="14.700" cy="330.400" r="1.400"/><circle cx="20.100" cy="330.400" r="1.400"/><circle cx="25.400" cy="330.400" r="1.400"/></g>
</svg>
<!-- float collapse button -->
<div class="a" style="left:1258.500px;top:78px;width:27px;height:27px;border-radius:50%;background:rgba(78,78,76,.88)"></div>
<svg style="left:1265px;top:85px" width="8" height="12" viewBox="0 0 8 12"><path d="M5.800 1.800L2 6l3.800 4.200" fill="none" stroke="#fff" stroke-width="1.400" stroke-linecap="round" stroke-linejoin="round"/></svg>
<!-- status bar -->
<div class="a" style="left:0;top:767px;width:1280px;height:24px;background:linear-gradient(to right,#ecece2 0%,#e9eae3 30%,#e8eae4 100%);border-top:1px solid #d4d5cf"></div>
<div class="a" style="left:0;top:788.500px;width:1280px;height:2.500px;background:linear-gradient(to right,#dbe6df,#e6dcd5 30%,#dce5e6 70%,#e0e5df)"></div>
<div class="a" style="left:887px;top:768px;width:20.500px;height:20px;background:#d8d9d5;border-radius:3px"></div>
<div class="t tl" style="left:4px;top:772.500px;font-size:11.500px;color:#2a2a2a">幻灯片 1 / 22</div>
<div class="a" style="left:76px;top:772px;width:1px;height:13px;background:#d6d6d0"></div>
<svg style="left:89px;top:771px" width="15" height="14" viewBox="0 0 15 14"><path class="ic" d="M4.600 1.600L1.600 4l1.600 2.200 1.400-.9v6.900h6v-2M4.600 1.600h1.600a1.400 1.400 0 0 0 2.800 0h1.600l3 2.400-1.600 2.200-1.400-.9v2M9.400 9.200l4.200 1.800-1.900.5 1.200 1.700"/></svg>
<div class="t tl" style="left:107px;top:772.500px;font-size:11.500px;color:#2a2a2a">Office 主题</div>
<div class="a" style="left:175px;top:772px;width:1px;height:13px;background:#dadad4"></div>
<svg style="left:189px;top:772px" width="12" height="11" viewBox="0 0 12 11"><path d="M6 .8l5.400 9.600H.6z" fill="#f6b73c"/><path d="M6 4v3.400" stroke="#7a4a00" stroke-width="1.100"/><circle cx="6" cy="8.800" r=".6" fill="#7a4a00"/></svg>
<div class="t tl" style="left:206px;top:772.500px;font-size:11px;color:#2a2a2a">缺失字体</div>
<svg style="left:660px;top:768px" width="620" height="22" viewBox="660 768 620 22">
<g class="ic">
<path d="M667.200 775.200a4.800 2 0 1 0 8.200-.6M667.200 775v5.800a4.300 2 0 0 0 8.600 0v-4.400M669 773.600l2.200-1 3.400.6"/>
<path d="M762.600 773.600h6.200M762.600 778h9.800M762.600 782.400h9.800M770 772.200l1.300 1.300 1.300-1.300" />
<path d="M838.500 780.800v-7.600h-10v9.200h2.200v2.400l2.600-2.400h2.400M837 782.600h3M838.500 781.100v3"/>
<rect x="891.500" y="772.700" width="12" height="10.600" rx="1.200"/><path d="M895.600 772.900v10.200"/>
<rect x="920.600" y="772.600" width="4.600" height="4.600" rx=".6"/><rect x="927.800" y="772.600" width="4.600" height="4.600" rx=".6"/><rect x="920.600" y="779.200" width="4.600" height="4.600" rx=".6"/><rect x="927.800" y="779.200" width="4.600" height="4.600" rx=".6"/>
<path d="M955.400 774.400q-2.600-1.800-5.400-1.400v9q2.800-.4 5.400 1.400q2.600-1.800 5.400-1.400v-9q-2.800-.4-5.400 1.400zM955.400 774.400v9"/>
<path d="M1038.200 775v-2.200h2.400M1046.600 772.800h2.400v2.200M1049 781v2.200h-2.400M1040.600 783.200h-2.400V781"/><rect x="1040.800" y="775.400" width="5.600" height="5.200" rx="1"/>
</g>
<g class="chev"><path d="M729.800 777l2.200 2.100 2.200-2.100"/><path d="M803.800 777l2.200 2.100 2.200-2.100"/><path d="M1008.500 777l2.200 2.100 2.200-2.100"/><path d="M1105.800 777l2.200 2.100 2.200-2.100"/></g>
<path d="M1127.800 778.200h10" stroke="#2b2b2b" stroke-width="1.800"/>
<path d="M1259.600 778.200h8.200M1263.700 774.100v8.200" stroke="#2b2b2b" stroke-width="1.700"/>
<path d="M1151 778h94" stroke="#cfd0cc" stroke-width="1.200"/><path d="M1151 778h30" stroke="#4e78ee" stroke-width="1.400"/>
<circle cx="1182" cy="778" r="4.200" fill="#fff" stroke="#d0d0cc" stroke-width=".7"/><circle cx="1182" cy="778" r="2.400" fill="#8a8a8a"/>
</svg>
<div class="t tl" style="left:682px;top:772.500px;font-size:11px;color:#2a2a2a">智能美化</div>
<div class="t tl" style="left:778.500px;top:772.500px;font-size:11px;color:#2a2a2a">备注</div>
<div class="t tl" style="left:845.500px;top:772.500px;font-size:11px;color:#2a2a2a">批注</div>
<div class="a" style="left:748px;top:772px;width:1px;height:13px;background:#e3e4de"></div>
<div class="a" style="left:879px;top:772px;width:1px;height:13px;background:#d6d6d0"></div>
<div class="a" style="left:1024px;top:772px;width:1px;height:13px;background:#d6d6d0"></div>
<div class="a" style="left:982.500px;top:770px;width:17.500px;height:15.500px;background:#e2641b;border-radius:2.500px"></div>
<svg style="left:987.500px;top:773.500px" width="8" height="9" viewBox="0 0 8 9"><path d="M1.200 .9v7.200l5.800-3.600z" fill="#fff"/></svg>
<div class="t tl" style="left:1071px;top:772.500px;font-size:11.500px;color:#2a2a2a;transform:scaleX(.92);transform-origin:0 50%">68%</div>
<!-- webcam cut-out (presenter) -->
<svg style="left:1010px;top:0" width="160" height="104" viewBox="1010 0 160 104">
<defs>
<filter id="pb" x="-5%" y="-5%" width="110%" height="110%"><feGaussianBlur stdDeviation=".55"/></filter>
<filter id="pb2" x="-20%" y="-20%" width="140%" height="140%"><feGaussianBlur stdDeviation="1.400"/></filter>
<linearGradient id="skn" x1="0" y1="0" x2="1" y2="1"><stop offset="0" stop-color="#e9b9a3"/><stop offset=".55" stop-color="#e2a894"/><stop offset="1" stop-color="#cf8f7e"/></linearGradient>
<linearGradient id="jk" x1="0" y1="0" x2="0" y2="1"><stop offset="0" stop-color="#262626"/><stop offset="1" stop-color="#161616"/></linearGradient>
<clipPath id="pc"><rect x="1010" y="0" width="160" height="98.500"/></clipPath>
</defs>
<g clip-path="url(#pc)" filter="url(#pb)">
<!-- jacket -->
<path d="M1016.500 99L1030.500 82.500Q1036 73 1040.500 71.600L1070.500 64L1078 70L1076 99Z" fill="url(#jk)"/>
<path d="M1092 99L1093 72L1100.300 66L1131.500 70.800Q1136.500 72 1141 79.500L1154.500 99Z" fill="url(#jk)"/>
<!-- shirt -->
<path d="M1071.200 99L1073.800 73.500Q1085 78.500 1096.600 74.500L1096.200 99Z" fill="#dcdde6"/>
<path d="M1073.500 75Q1085 80.500 1096.600 76" fill="none" stroke="#c3c5d0" stroke-width="1.600" opacity=".7"/>
<!-- neck -->
<path d="M1076.300 60L1075.200 73.600Q1085.500 79.600 1096.600 73.800L1096.300 58Z" fill="#d59683"/>
<!-- ears -->
<ellipse cx="1065.800" cy="46" rx="2.200" ry="4.200" fill="#d9a08c"/>
<ellipse cx="1110" cy="46.500" rx="2.200" ry="4.200" fill="#cf917e"/>
<!-- face -->
<path d="M1066.300 36Q1066 47 1068.400 55Q1071.500 66.500 1080.500 74.500Q1086.800 78.600 1093 74Q1102.500 66 1107 54.500Q1110 46 1109.300 35Q1104 14 1088 14Q1071 14 1066.300 36Z" fill="url(#skn)"/>
<!-- hair -->
<path d="M1063.600 44.500Q1061.500 33 1064.600 26Q1069.500 12.600 1083.500 10Q1090.500 8.600 1097.500 11.500Q1108.500 16.500 1112.200 28Q1115.600 37 1112.600 47.500L1109.600 49.500Q1110 38 1106 29Q1102 20 1095.500 14.600Q1085.500 22.500 1077 33Q1073 38.500 1067.500 42.500Z" fill="#2a221e"/>
<path d="M1093 13Q1084 17.500 1076.500 27Q1072 33 1068.500 40" fill="none" stroke="#6a5a4e" stroke-width="1.200" opacity=".5"/>
<!-- brows / eyes -->
<path d="M1070.800 37.300Q1075.500 35.200 1081 37M1091.500 36.800Q1097 35 1102.500 37" fill="none" stroke="#4a3830" stroke-width="1.100" opacity=".75"/>
<ellipse cx="1076.800" cy="41.300" rx="3.600" ry="1.500" fill="#2f9a78" opacity=".8"/>
<ellipse cx="1096.400" cy="41.300" rx="3.600" ry="1.500" fill="#2f9a78" opacity=".8"/>
<path d="M1073.600 40.400Q1076.800 39.200 1080.200 40.600M1093.200 40.600Q1096.400 39.200 1099.800 40.400" fill="none" stroke="#33261f" stroke-width=".9"/>
<!-- glasses -->
<g fill="none" stroke="#e9d8d2" stroke-width=".8" opacity=".9"><ellipse cx="1076" cy="44.300" rx="9" ry="7.600"/><ellipse cx="1098" cy="44.300" rx="9.600" ry="7.600"/><path d="M1085 42.500q2-1.200 4 0M1067 42l-3-1M1107.600 43l4-1" stroke="#b79a8e"/></g>
<circle cx="1107.600" cy="44.200" r="1.300" fill="#fff" opacity=".9"/>
<!-- nose / mouth -->
<path d="M1084.600 45Q1083 52 1081.800 53.500Q1085.600 56 1090 53.400" fill="none" stroke="#c98674" stroke-width="1.100" opacity=".8"/>
<path d="M1078.600 61.200Q1085.600 63.600 1092.600 60.800Q1086 65.400 1078.600 61.200Z" fill="#c25f63" stroke="#b9585c" stroke-width=".6"/>
<ellipse cx="1073" cy="54" rx="3.500" ry="2.600" fill="#e79a8c" opacity=".5" filter="url(#pb2)"/>
<ellipse cx="1101" cy="54" rx="3.500" ry="2.600" fill="#e79a8c" opacity=".5" filter="url(#pb2)"/>
</g>
</svg>
</body>
</html>
